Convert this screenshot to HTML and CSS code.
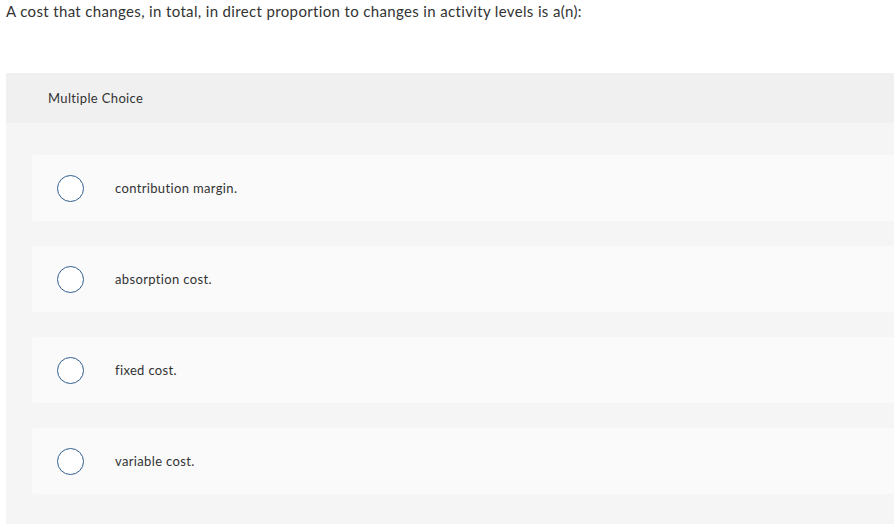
FILE: index.html
```html
<!DOCTYPE html>
<html>
<head>
<meta charset="utf-8">
<link rel="stylesheet" href="styles.css">
</head>
<body>
<p class="prompt">A cost that changes, in total, in direct proportion to changes in activity levels is a(n):</p>
<section class="panel">
  <div class="panel-head">Multiple Choice</div>
  <div class="options">
    <label class="option"><span class="radio"></span><span class="text">contribution margin.</span></label>
    <label class="option"><span class="radio"></span><span class="text">absorption cost.</span></label>
    <label class="option"><span class="radio"></span><span class="text">fixed cost.</span></label>
    <label class="option"><span class="radio"></span><span class="text">variable cost.</span></label>
  </div>
</section>
</body>
</html>
```
FILE: styles.css
```css
html, body {
  margin: 0;
  padding: 0;
  background: #fff;
  font-family: "Lato", "Liberation Sans", sans-serif;
  color: #333;
  letter-spacing: 0.35px;
  overflow: hidden;
}
.prompt {
  margin: 0;
  padding: 2px 0 0 6px;
  font-size: 15px;
  line-height: 18px;
  height: 73px;
  box-sizing: border-box;
}
.panel {
  margin-left: 6px;
  background: #f5f5f5;
  height: 460px;
}
.panel-head {
  background: #f0f0f0;
  height: 50px;
  display: flex;
  align-items: center;
  padding-left: 42px;
  font-size: 13px;
}
.options {
  padding: 32px 0 0 26px;
  display: flex;
  flex-direction: column;
  gap: 25px;
}
.option {
  height: 66px;
  background: #fafafa;
  border-radius: 3px 0 0 3px;
  display: flex;
  align-items: center;
  font-size: 13px;
}
.radio {
  width: 25px;
  height: 25px;
  border: 1.5px solid #2f5f8f;
  border-radius: 50%;
  background: #fff;
  margin-left: 25px;
  flex: none;
}
.text {
  margin-left: 31px;
}
```
